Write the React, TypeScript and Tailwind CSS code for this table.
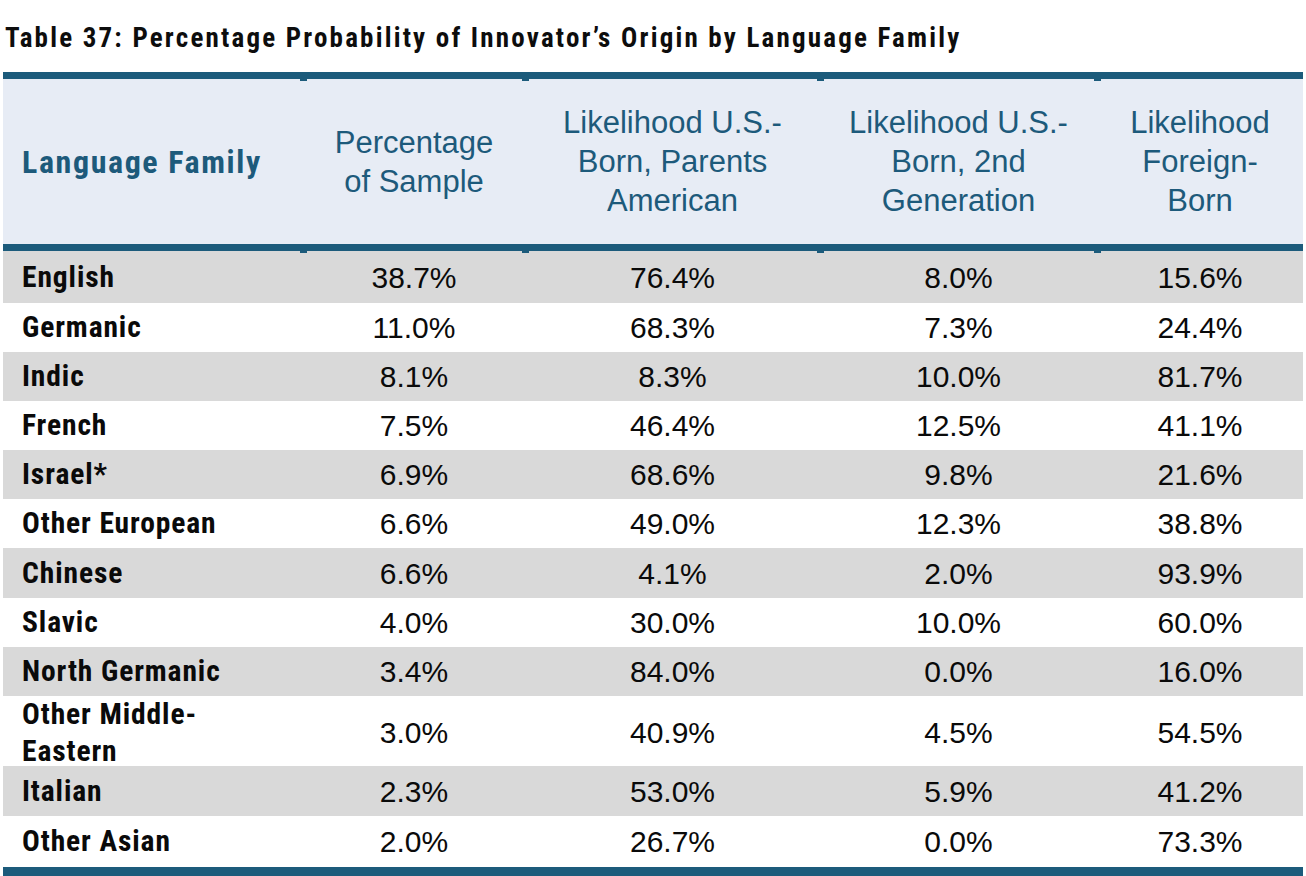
import React from "react";

const BLUE = "bg-[#1c5b7b]";

const rows: { label: string[]; vals: string[]; h: string }[] = [
  { label: ["English"], vals: ["38.7%", "76.4%", "8.0%", "15.6%"], h: "h-[52px]" },
  { label: ["Germanic"], vals: ["11.0%", "68.3%", "7.3%", "24.4%"], h: "h-[49.1px]" },
  { label: ["Indic"], vals: ["8.1%", "8.3%", "10.0%", "81.7%"], h: "h-[49.1px]" },
  { label: ["French"], vals: ["7.5%", "46.4%", "12.5%", "41.1%"], h: "h-[49.1px]" },
  { label: ["Israel*"], vals: ["6.9%", "68.6%", "9.8%", "21.6%"], h: "h-[49.1px]" },
  { label: ["Other European"], vals: ["6.6%", "49.0%", "12.3%", "38.8%"], h: "h-[49.1px]" },
  { label: ["Chinese"], vals: ["6.6%", "4.1%", "2.0%", "93.9%"], h: "h-[49.1px]" },
  { label: ["Slavic"], vals: ["4.0%", "30.0%", "10.0%", "60.0%"], h: "h-[49.1px]" },
  { label: ["North Germanic"], vals: ["3.4%", "84.0%", "0.0%", "16.0%"], h: "h-[49.1px]" },
  { label: ["Other Middle-", "Eastern"], vals: ["3.0%", "40.9%", "4.5%", "54.5%"], h: "h-[70.4px]" },
  { label: ["Italian"], vals: ["2.3%", "53.0%", "5.9%", "41.2%"], h: "h-[50px]" },
  { label: ["Other Asian"], vals: ["2.0%", "26.7%", "0.0%", "73.3%"], h: "h-[51px]" },
];

const cond = "font-['Roboto_Condensed','Roboto',sans-serif] font-bold";
const reg = "font-['Liberation_Sans','Arial',sans-serif]";
const grid = "grid grid-cols-[300px_222px_295px_277px_206px]";

function Notches() {
  return (
    <>
      <span className={`absolute top-full left-[297px] w-[7px] h-[1.5px] ${BLUE}`} />
      <span className={`absolute top-full left-[519px] w-[7px] h-[1.5px] ${BLUE}`} />
      <span className={`absolute top-full left-[814px] w-[7px] h-[1.5px] ${BLUE}`} />
      <span className={`absolute top-full left-[1091px] w-[7px] h-[1.5px] ${BLUE}`} />
    </>
  );
}

export default function App() {
  return (
    <div className="w-[1306px] h-[876px] overflow-hidden bg-white">
      <div className="h-[72px] pl-[5px] pt-[23px]">
        <h1 className={`${cond} text-[27px] leading-[30px] tracking-[2.2px] text-[#0d0d0d] whitespace-nowrap`}>
          Table 37: Percentage Probability of Innovator’s Origin by Language Family
        </h1>
      </div>
      <div className="ml-[3px] w-[1300px]">
        <div className={`relative h-[7px] ${BLUE}`}>
          <Notches />
        </div>
        <div className={`${grid} h-[165px] bg-[#e7ecf5] text-[#1d5a7b]`}>
          <div className="flex items-center pl-[19px]">
            <span className={`${cond} text-[32px] tracking-[1.6px] whitespace-nowrap`}>Language Family</span>
          </div>
          {[
            ["Percentage", "of Sample"],
            ["Likelihood U.S.-", "Born, Parents", "American"],
            ["Likelihood U.S.-", "Born, 2nd", "Generation"],
            ["Likelihood", "Foreign-", "Born"],
          ].map((lines, i) => (
            <div key={i} className={`flex flex-col items-center justify-center ${reg} text-[31px] leading-[39px] text-center`}>
              {lines.map((l) => (
                <span key={l}>{l}</span>
              ))}
            </div>
          ))}
        </div>
        <div className={`relative h-[7px] ${BLUE}`}>
          <Notches />
        </div>
        {rows.map((r, i) => (
          <div key={i} className={`${grid} ${r.h} ${i % 2 === 0 ? "bg-[#d9d9d9]" : "bg-white"} text-[#0a0a0a]`}>
            <div className="flex flex-col justify-center pl-[19px]">
              {r.label.map((l) => (
                <span key={l} className={`${cond} text-[29.5px] leading-[37px] tracking-[0.9px] whitespace-nowrap`}>
                  {l}
                </span>
              ))}
            </div>
            {r.vals.map((v, j) => (
              <div key={j} className={`flex items-center justify-center ${reg} text-[30px]`}>
                {v}
              </div>
            ))}
          </div>
        ))}
        <div className={`h-[10px] ${BLUE}`} />
      </div>
    </div>
  );
}
